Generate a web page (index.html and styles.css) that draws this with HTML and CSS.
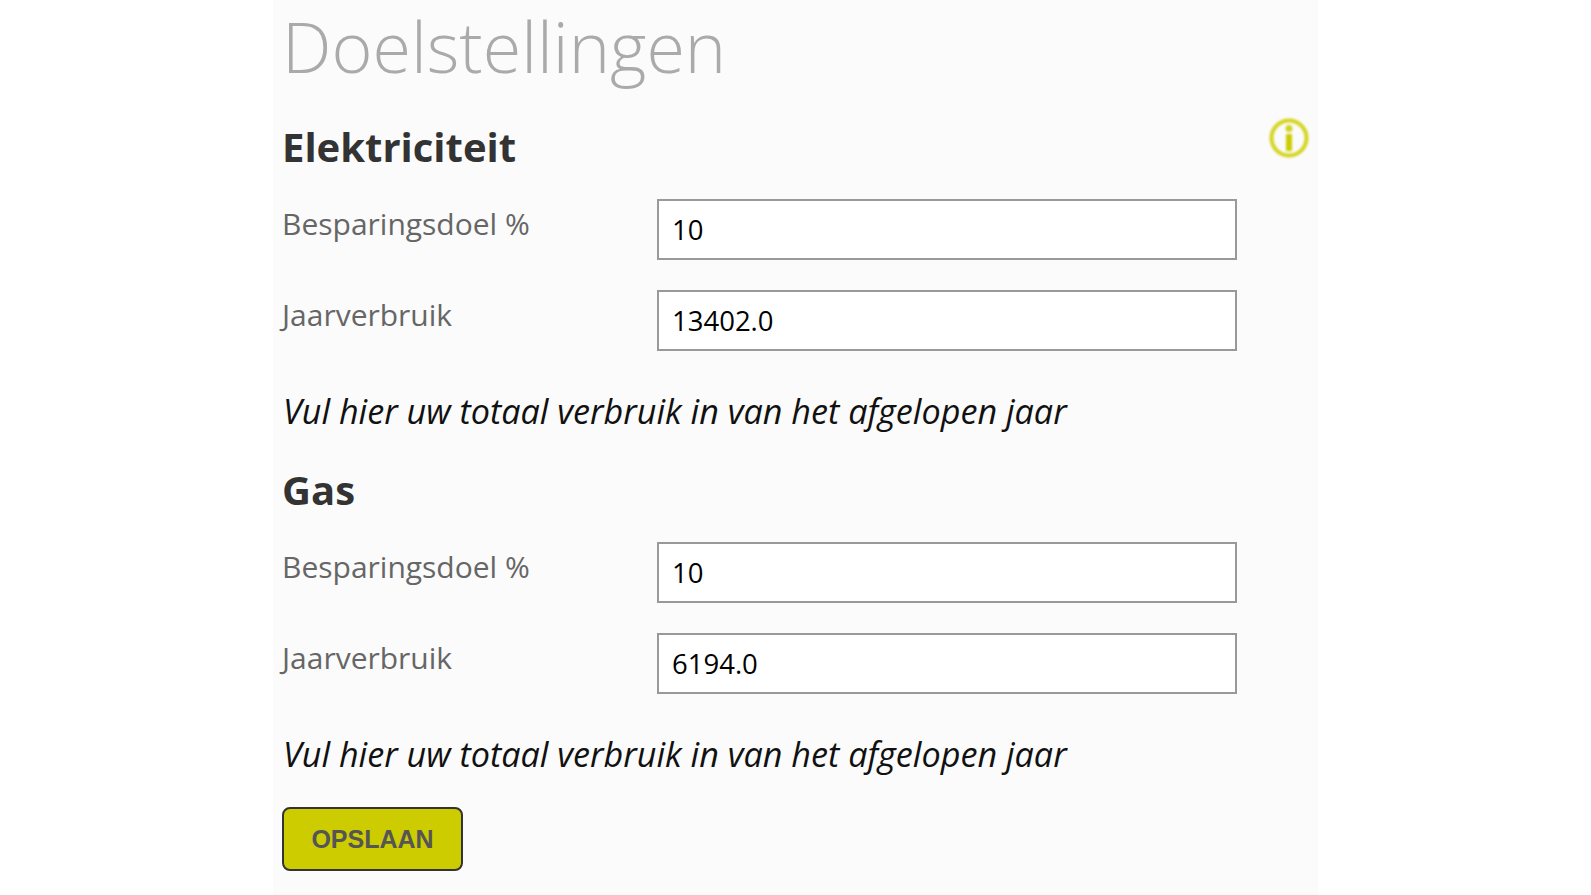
FILE: index.html
```html
<!DOCTYPE html>
<html lang="nl">
<head>
    <meta charset="UTF-8">
    <title>Doelstellingen</title>
    <link rel="stylesheet" href="styles.css">
</head>
<body>
    <div class="content">
        <h1>Doelstellingen</h1>

        <div class="section-head">
            <h2>Elektriciteit</h2>
            <svg class="info-icon" viewBox="0 0 40 40" width="40" height="40">
                <circle cx="20" cy="20" r="17.5" fill="none" stroke="#d4d41e" stroke-width="4"/>
                <circle cx="20" cy="10.5" r="3.5" fill="#d2d21e"/>
                <rect x="17" y="16" width="6" height="17" fill="#cccc00"/>
            </svg>
        </div>
        <div class="form-row">
            <label class="form-label">Besparingsdoel %</label>
            <input class="form-input" type="text" value="10">
        </div>
        <div class="form-row">
            <label class="form-label">Jaarverbruik</label>
            <input class="form-input" type="text" value="13402.0">
        </div>
        <p class="hint">Vul hier uw totaal verbruik in van het afgelopen jaar</p>

        <div class="section-head">
            <h2>Gas</h2>
        </div>
        <div class="form-row">
            <label class="form-label">Besparingsdoel %</label>
            <input class="form-input" type="text" value="10">
        </div>
        <div class="form-row">
            <label class="form-label">Jaarverbruik</label>
            <input class="form-input" type="text" value="6194.0">
        </div>
        <p class="hint">Vul hier uw totaal verbruik in van het afgelopen jaar</p>

        <button class="save-button">OPSLAAN</button>
    </div>
</body>
</html>
```

FILE: styles.css
```css
html, body {
    height: 100%;
}
body {
    margin: 0;
    background: #fff;
    font-family: "Open Sans", sans-serif;
    overflow: hidden;
}
.content {
    box-sizing: border-box;
    width: 1045px;
    height: 895px;
    margin-left: 273px;
    padding: 0 9px 0 9px;
    background: #fbfbfb;
}
h1 {
    margin: 0;
    padding-top: 2px;
    padding-bottom: 2px;
    font-size: 70px;
    font-weight: 300;
    line-height: 88px;
    color: #aaa;
}
.section-head {
    display: flex;
    justify-content: space-between;
    align-items: flex-start;
    height: 107px;
}
.section-head h2 {
    margin: 0;
    padding-top: 28px;
    font-size: 40px;
    font-weight: 700;
    line-height: 54px;
    color: #333;
}
.info-icon {
    margin-top: 26px;
    filter: blur(0.8px);
}
.form-row {
    display: flex;
    align-items: flex-start;
    height: 61px;
    margin-bottom: 30px;
}
.form-label {
    width: 375px;
    font-size: 30px;
    line-height: 50px;
    color: #666;
}
.form-input {
    box-sizing: border-box;
    width: 580px;
    height: 61px;
    padding: 0 13px;
    border: 2px solid #999;
    background: #fff;
    font-family: "Open Sans", sans-serif;
    font-size: 27.5px;
    color: #000;
}
.hint {
    margin: 0;
    padding-top: 3px;
    padding-left: 1px;
    height: 51px;
    font-size: 34.15px;
    font-style: italic;
    line-height: 54px;
    color: #111;
}
.save-button {
    display: block;
    width: 181px;
    height: 64px;
    margin-top: 29px;
    border: 2px solid #333;
    border-radius: 8px;
    background: #cccc00;
    font-family: "Liberation Sans", sans-serif;
    font-size: 25px;
    font-weight: 700;
    color: #555;
}
```
